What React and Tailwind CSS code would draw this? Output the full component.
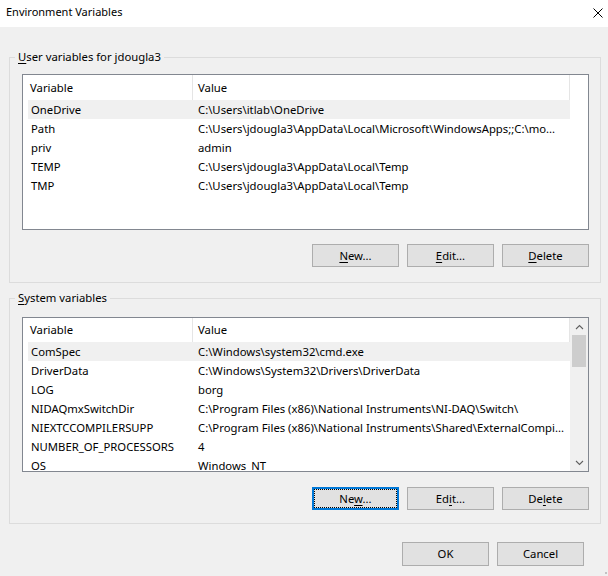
import React from "react";

const userRows = [
  ["OneDrive", "C:\\Users\\itlab\\OneDrive", true],
  ["Path", "C:\\Users\\jdougla3\\AppData\\Local\\Microsoft\\WindowsApps;;C:\\mo...", false],
  ["priv", "admin", false],
  ["TEMP", "C:\\Users\\jdougla3\\AppData\\Local\\Temp", false],
  ["TMP", "C:\\Users\\jdougla3\\AppData\\Local\\Temp", false],
];

const sysRows = [
  ["ComSpec", "C:\\Windows\\system32\\cmd.exe", true],
  ["DriverData", "C:\\Windows\\System32\\Drivers\\DriverData", false],
  ["LOG", "borg", false],
  ["NIDAQmxSwitchDir", "C:\\Program Files (x86)\\National Instruments\\NI-DAQ\\Switch\\", false],
  ["NIEXTCCOMPILERSUPP", "C:\\Program Files (x86)\\National Instruments\\Shared\\ExternalCompi...", false],
  ["NUMBER_OF_PROCESSORS", "4", false],
  ["OS", "Windows_NT", false],
];

function Chevron({ up }) {
  return (
    <svg width="9" height="6" viewBox="0 0 9 6" className="block">
      <path
        d={up ? "M1 5 L4.5 1.5 L8 5" : "M1 1 L4.5 4.5 L8 1"}
        fill="none"
        stroke="#606060"
        strokeWidth="1.1"
      />
    </svg>
  );
}

function Rows({ rows }) {
  return (
    <div className="flex flex-col">
      {rows.map(([k, v, sel]) => (
        <div
          key={k}
          className={
            "ml-[5px] w-[542px] h-[19px] shrink-0 flex items-center whitespace-nowrap " +
            (sel ? "bg-[#f0f0f0]" : "")
          }
        >
          <div className="w-[164px] shrink-0 pl-[3px] overflow-hidden">{k}</div>
          <div className="flex-1 pl-[6px] overflow-hidden">{v}</div>
        </div>
      ))}
    </div>
  );
}

function Header({ hClass }) {
  return (
    <div className={"flex shrink-0 " + hClass}>
      <div className="w-[170px] shrink-0 border-r border-[#e5e5e5] pl-[7px] flex items-center">Variable</div>
      <div className="w-[377px] shrink-0 border-r border-[#e5e5e5] pl-[5px] flex items-center">Value</div>
      <div className="flex-1"></div>
    </div>
  );
}

function Btn({ children, focused }) {
  if (focused) {
    return (
      <div className="w-[87px] h-[23px] bg-[#e1e1e1] border-2 border-[#0078d7] flex p-[0px]">
        <div className="flex-1 border border-dotted border-black flex items-center justify-center">
          {children}
        </div>
      </div>
    );
  }
  return (
    <div className="w-[87px] h-[23px] bg-[#e1e1e1] border border-[#adadad] flex items-center justify-center">
      {children}
    </div>
  );
}

export default function App() {
  return (
    <div className="w-[608px] h-[576px] bg-[#f0f0f0] relative overflow-hidden text-[11.3px] text-black font-['Noto_Sans',sans-serif] leading-[16px]">
      {/* Title bar */}
      <div className="h-[27px] bg-white flex items-center justify-between pl-[6px] pr-[5px] pb-[3px]">
        <span className="text-[11px]">Environment Variables</span>
        <svg width="10" height="10" viewBox="0 0 10 10" className="block mt-[1px]">
          <path d="M0.5 0.5 L9.5 9.5 M9.5 0.5 L0.5 9.5" stroke="#000" strokeWidth="1" />
        </svg>
      </div>

      <div className="pl-[9px] pr-[7px]">
        {/* User variables */}
        <fieldset className="mt-[22px] border border-[#dcdcdc]">
          <legend className="ml-[5px] px-[3px] leading-[16px]">
            <span className="underline underline-offset-2">U</span>ser variables for jdougla3
          </legend>
          <div className="pt-[9px] pl-[12px] pr-[11px] pb-[15px]">
            <div className="h-[156px] border border-[#828790] bg-white overflow-hidden flex flex-col">
              <Header hClass="h-[25px]" />
              <Rows rows={userRows} />
            </div>
            <div className="mt-[14px] flex justify-end gap-[8px]">
              <Btn><span><span className="underline underline-offset-2">N</span>ew...</span></Btn>
              <Btn><span><span className="underline underline-offset-2">E</span>dit...</span></Btn>
              <Btn><span><span className="underline underline-offset-2">D</span>elete</span></Btn>
            </div>
          </div>
        </fieldset>

        {/* System variables */}
        <fieldset className="mt-[7px] border border-[#dcdcdc]">
          <legend className="ml-[5px] px-[3px] leading-[16px]">
            <span className="underline underline-offset-2">S</span>ystem variables
          </legend>
          <div className="pt-[11px] pl-[12px] pr-[11px] pb-[13px]">
            <div className="h-[155px] border border-[#828790] bg-white overflow-hidden flex">
              <div className="w-[547px] shrink-0 flex flex-col overflow-hidden">
                <Header hClass="h-[24px]" />
                <Rows rows={sysRows} />
              </div>
              <div className="w-[18px] shrink-0 bg-[#f0f0f0] flex flex-col">
                <div className="h-[17px] shrink-0 flex items-center justify-center">
                  <Chevron up />
                </div>
                <div className="flex-1 px-[2px]">
                  <div className="h-[32px] bg-[#cdcdcd]"></div>
                </div>
                <div className="h-[17px] shrink-0 flex items-center justify-center">
                  <Chevron />
                </div>
              </div>
            </div>
            <div className="mt-[15px] flex justify-end gap-[8px]">
              <Btn focused><span>Ne<span className="underline underline-offset-2">w</span>...</span></Btn>
              <Btn><span>Ed<span className="underline underline-offset-2">i</span>t...</span></Btn>
              <Btn><span>De<span className="underline underline-offset-2">l</span>ete</span></Btn>
            </div>
          </div>
        </fieldset>
      </div>

      {/* OK / Cancel */}
      <div className="mt-[18px] pr-[24px] flex justify-end gap-[8px]">
        <div className="w-[87px] h-[24px] bg-[#e1e1e1] border border-[#adadad] flex items-center justify-center">OK</div>
        <div className="w-[87px] h-[24px] bg-[#e1e1e1] border border-[#adadad] flex items-center justify-center">Cancel</div>
      </div>

      {/* Resize grip */}
      <svg width="8" height="8" viewBox="0 0 8 8" className="absolute right-0 bottom-0 block">
        <rect x="5" y="4" width="2" height="2" fill="#c2c2c2" />
      </svg>
    </div>
  );
}
